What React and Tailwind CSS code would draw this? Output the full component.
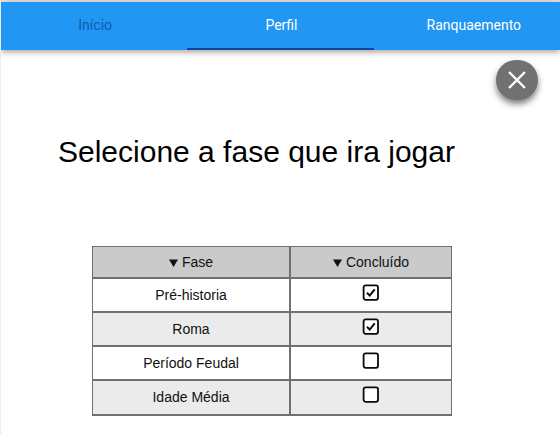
const rows = [
  { name: 'Pré-historia', done: true, fill: 'bg-white' },
  { name: 'Roma', done: true, fill: 'bg-[#ebebeb]' },
  { name: 'Período Feudal', done: false, fill: 'bg-white' },
  { name: 'Idade Média', done: false, fill: 'bg-[#ebebeb]' },
];

function Checkbox({ checked }) {
  return (
    <svg width="18" height="18" viewBox="0 0 18 18" fill="none" stroke="#0a0a0a" className="block">
      <rect x="1.6" y="1.4" width="14.4" height="14.4" rx="2" strokeWidth="1.8" fill="#fff" />
      {checked && <path d="M5 8.8 L7.7 11.6 L12.7 5.4" strokeWidth="2" />}
    </svg>
  );
}

function HeaderLabel({ children }) {
  return (
    <div className="flex items-center justify-center gap-[4px] bg-[#cacaca] text-[14px] leading-[30px]">
      <svg width="9" height="8" viewBox="0 0 9 8" className="mt-[2px]">
        <path d="M0 0.5H9L4.5 8Z" fill="#111" />
      </svg>
      <span>{children}</span>
    </div>
  );
}

const columns = 'grid grid-cols-[196px_160px] gap-x-[2px]';

export default function App() {
  return (
    <div className="h-[434px] w-[560px] overflow-hidden border-l border-[#ececec] bg-white font-['Liberation_Sans',Arial,sans-serif] text-[#111]">
      <div className="h-[2px] bg-[#e4e2e4]" />
      <nav className="grid h-[48px] grid-cols-3 bg-[#2196f3] text-center font-[Roboto,sans-serif] text-[14px] leading-[46px] text-white shadow-[0_2px_6px_rgba(60,40,40,0.45)]">
        <div className="pl-[2px] text-[#0f5cae]">Início</div>
        <div className="border-b-2 border-[#0d47a1] pl-[2px]">Perfil</div>
        <div className="pl-[14px]">Ranquaemento</div>
      </nav>
      <div className="flex justify-end pt-[10px] pr-[22px]">
        <button className="flex h-[40px] w-[42px] items-center justify-center rounded-full bg-[#717171] shadow-[0_4px_6px_rgba(0,0,0,0.5)]">
          <svg width="18" height="18" viewBox="0 0 18 18" stroke="#fff" strokeWidth="2.4">
            <path d="M1 1L17 17M17 1L1 17" />
          </svg>
        </button>
      </div>
      <h1 className="mt-[32px] ml-[57px] text-[30px] leading-[40px] whitespace-nowrap text-black">
        Selecione a fase que ira jogar
      </h1>
      <div className="mt-[74px] ml-[91px] w-[360px] border-t border-r border-b-2 border-l border-[#707070] bg-[#707070]">
        <div className={columns}>
          <HeaderLabel>Fase</HeaderLabel>
          <HeaderLabel>Concluído</HeaderLabel>
        </div>
        {rows.map((row) => (
          <div key={row.name} className={`${columns} mt-[2px] last:h-[33px]`}>
            <div className={`${row.fill} text-center text-[14px] leading-[32px]`}>{row.name}</div>
            <div className={`${row.fill} flex justify-center pt-[5px]`}>
              <Checkbox checked={row.done} />
            </div>
          </div>
        ))}
      </div>
    </div>
  );
}
